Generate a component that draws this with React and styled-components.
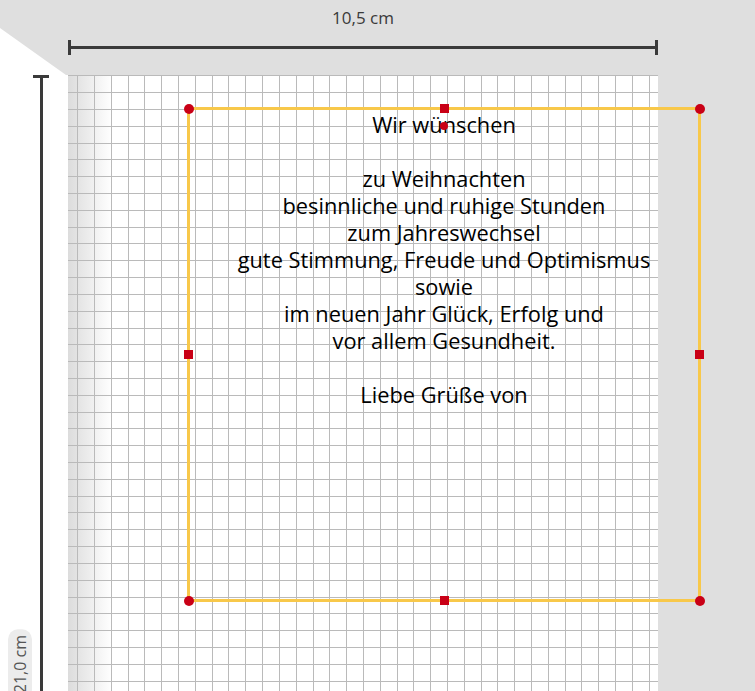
import React from "react";
import styled, { createGlobalStyle, css } from "styled-components";

const GlobalStyle = createGlobalStyle`
  html, body {
    margin: 0;
    padding: 0;
    background: #dfdfdf;
    overflow: hidden;
  }
  body {
    font-family: "Open Sans", "Noto Sans", "Liberation Sans", sans-serif;
  }
`;

const INK = "#3a3a3a";
const GRID = "#bababa";
const SELECT = "#f8c84a";
const HANDLE = "#c90016";

const Stage = styled.div`
  display: grid;
  grid-template-columns: 68px 590px 1fr;
  grid-template-rows: 75px 1fr;
  width: 755px;
  height: 691px;
  overflow: hidden;
  background: #dfdfdf;
`;

/* white paper edge folding in at the top-left corner */
const Corner = styled.div`
  background: #fff;
  clip-path: polygon(0 28px, 66px 75px, 0 75px);
`;

const TopRuler = styled.div`
  display: flex;
  flex-direction: column;
  align-items: center;
  padding-top: 8px;
`;

const MeasureLabel = styled.div`
  font-size: 17px;
  line-height: 20px;
  color: ${INK};
`;

const HDimension = styled.div`
  align-self: stretch;
  margin-top: 12px;
  height: 15px;
  border-left: 3px solid ${INK};
  border-right: 3px solid ${INK};
  display: flex;
  align-items: center;

  &::before {
    content: "";
    flex: 1;
    height: 3px;
    background: ${INK};
  }
`;

const LeftRuler = styled.div`
  background: #fff;
  display: flex;
  align-items: stretch;
  padding-left: 8px;
`;

const SidePill = styled.div`
  align-self: flex-end;
  width: 24px;
  margin-bottom: -8px;
  padding: 6px 0;
  box-sizing: border-box;
  background: #ececec;
  border-radius: 10px;
  writing-mode: vertical-rl;
  transform: rotate(180deg);
  display: flex;
  align-items: center;
  font-size: 16px;
  line-height: 24px;
  color: #555;
  white-space: nowrap;
`;

const VDimension = styled.div`
  width: 16px;
  margin-left: 1px;
  border-top: 3px solid ${INK};
  display: flex;
  justify-content: center;

  &::before {
    content: "";
    width: 3px;
    background: ${INK};
  }
`;

const Sheet = styled.div`
  position: relative;
  background-color: #fff;
  background-image:
    repeating-linear-gradient(
      to right,
      ${GRID} -7.61px,
      ${GRID} -6.61px,
      transparent -6.61px,
      transparent 9.2px
    ),
    repeating-linear-gradient(
      to bottom,
      ${GRID} 0.4px,
      ${GRID} 1.4px,
      transparent 1.4px,
      transparent 17.21px
    ),
    linear-gradient(to right, #dcdcdc 0, rgba(255, 255, 255, 0) 44px);
`;

const Frame = styled.div`
  position: absolute;
  left: 119px;
  top: 32px;
  width: 514px;
  height: 495px;
  box-sizing: border-box;
  border: 3px solid ${SELECT};
  padding-top: 1px;
`;

const TextBlock = styled.div`
  font-size: 21.8px;
  line-height: 27px;
  color: #000;
  text-align: center;
  white-space: pre;
`;

const axis = (where, r) => {
  if (where === "start") return `calc(-1.5px - ${r}px)`;
  if (where === "mid") return `calc(50% - ${r}px)`;
  return `calc(100% + 1.5px - ${r}px)`;
};

const Handle = styled.span`
  position: absolute;
  background: ${HANDLE};
  ${({ $shape, $x, $y }) => {
    const size = $shape === "dot" ? 10 : 9;
    const r = size / 2;
    return css`
      width: ${size}px;
      height: ${size}px;
      border-radius: ${$shape === "dot" ? "50%" : "0"};
      left: ${axis($x, r)};
      top: ${axis($y, r)};
    `;
  }}
`;

const RotateKnob = styled.span`
  position: absolute;
  width: 8px;
  height: 8px;
  border-radius: 50%;
  background: ${HANDLE};
  left: calc(50% - 4.5px);
  top: 12px;
`;

const greeting = [
  "Wir wünschen",
  "",
  "zu Weihnachten",
  "besinnliche und ruhige Stunden",
  "zum Jahreswechsel",
  "gute Stimmung, Freude und Optimismus",
  "sowie",
  "im neuen Jahr Glück, Erfolg und",
  "vor allem Gesundheit.",
  "",
  "Liebe Grüße von",
];

const handles = [
  { $shape: "dot", $x: "start", $y: "start" },
  { $shape: "square", $x: "mid", $y: "start" },
  { $shape: "dot", $x: "end", $y: "start" },
  { $shape: "square", $x: "start", $y: "mid" },
  { $shape: "square", $x: "end", $y: "mid" },
  { $shape: "dot", $x: "start", $y: "end" },
  { $shape: "square", $x: "mid", $y: "end" },
  { $shape: "dot", $x: "end", $y: "end" },
];

export default function App() {
  return (
    <>
      <GlobalStyle />
      <Stage>
        <Corner />
        <TopRuler>
          <MeasureLabel>10,5 cm</MeasureLabel>
          <HDimension />
        </TopRuler>
        <div />
        <LeftRuler>
          <SidePill>21,0 cm</SidePill>
          <VDimension />
        </LeftRuler>
        <Sheet>
          <Frame>
            <TextBlock>
              {greeting.map((line, i) => (
                <div key={i}>{line || "\u00a0"}</div>
              ))}
            </TextBlock>
            {handles.map((h, i) => (
              <Handle key={i} {...h} />
            ))}
            <RotateKnob />
          </Frame>
        </Sheet>
        <div />
      </Stage>
    </>
  );
}
